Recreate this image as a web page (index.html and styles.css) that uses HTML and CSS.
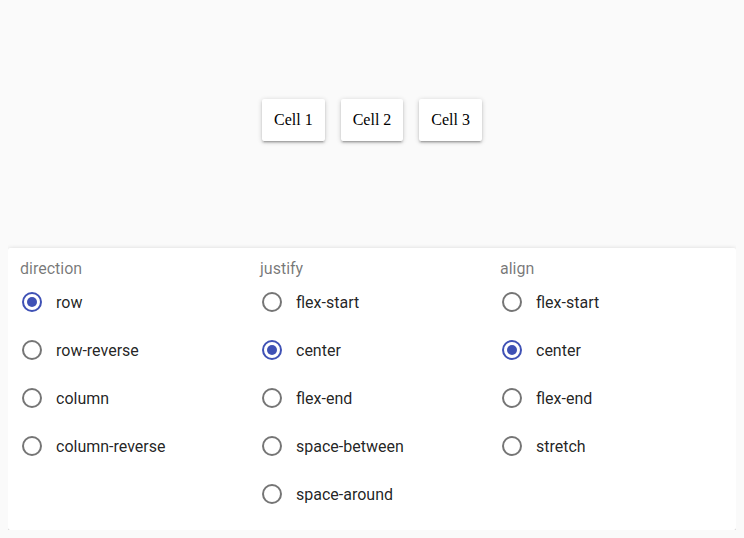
FILE: index.html
```html
<!DOCTYPE html>
<html>
<head>
<meta charset="utf-8">
<link rel="stylesheet" href="styles.css">
</head>
<body>
<div class="stage">
  <div class="cell">Cell 1</div>
  <div class="cell">Cell 2</div>
  <div class="cell">Cell 3</div>
</div>
<div class="panel">
  <div class="group">
    <div class="legend">direction</div>
    <label class="opt"><span class="radio on"><svg viewBox="0 0 24 24"><circle cx="12" cy="12" r="9"/><circle class="dot" cx="12" cy="12" r="5"/></svg></span><span>row</span></label>
    <label class="opt"><span class="radio"><svg viewBox="0 0 24 24"><circle cx="12" cy="12" r="9"/></svg></span><span>row-reverse</span></label>
    <label class="opt"><span class="radio"><svg viewBox="0 0 24 24"><circle cx="12" cy="12" r="9"/></svg></span><span>column</span></label>
    <label class="opt"><span class="radio"><svg viewBox="0 0 24 24"><circle cx="12" cy="12" r="9"/></svg></span><span>column-reverse</span></label>
  </div>
  <div class="group">
    <div class="legend">justify</div>
    <label class="opt"><span class="radio"><svg viewBox="0 0 24 24"><circle cx="12" cy="12" r="9"/></svg></span><span>flex-start</span></label>
    <label class="opt"><span class="radio on"><svg viewBox="0 0 24 24"><circle cx="12" cy="12" r="9"/><circle class="dot" cx="12" cy="12" r="5"/></svg></span><span>center</span></label>
    <label class="opt"><span class="radio"><svg viewBox="0 0 24 24"><circle cx="12" cy="12" r="9"/></svg></span><span>flex-end</span></label>
    <label class="opt"><span class="radio"><svg viewBox="0 0 24 24"><circle cx="12" cy="12" r="9"/></svg></span><span>space-between</span></label>
    <label class="opt"><span class="radio"><svg viewBox="0 0 24 24"><circle cx="12" cy="12" r="9"/></svg></span><span>space-around</span></label>
  </div>
  <div class="group">
    <div class="legend">align</div>
    <label class="opt"><span class="radio"><svg viewBox="0 0 24 24"><circle cx="12" cy="12" r="9"/></svg></span><span>flex-start</span></label>
    <label class="opt"><span class="radio on"><svg viewBox="0 0 24 24"><circle cx="12" cy="12" r="9"/><circle class="dot" cx="12" cy="12" r="5"/></svg></span><span>center</span></label>
    <label class="opt"><span class="radio"><svg viewBox="0 0 24 24"><circle cx="12" cy="12" r="9"/></svg></span><span>flex-end</span></label>
    <label class="opt"><span class="radio"><svg viewBox="0 0 24 24"><circle cx="12" cy="12" r="9"/></svg></span><span>stretch</span></label>
  </div>
</div>
</body>
</html>
```

FILE: styles.css
```css
html, body {
  background: #fafafa;
}
body {
  margin: 8px;
  font-family: "Liberation Serif", serif;
}
.stage {
  height: 224px;
  display: flex;
  align-items: center;
  justify-content: center;
  gap: 16px;
  margin-bottom: 16px;
}
.cell {
  background: #fff;
  padding: 12px;
  font-size: 16px;
  line-height: 18px;
  color: #000;
  border-radius: 2px;
  box-shadow: 0 1px 5px 0 rgba(0,0,0,0.2), 0 2px 2px 0 rgba(0,0,0,0.14), 0 3px 1px -2px rgba(0,0,0,0.12);
}
.panel {
  background: #fff;
  border-radius: 2px;
  box-shadow: 0 1px 5px 0 rgba(0,0,0,0.2), 0 2px 2px 0 rgba(0,0,0,0.14), 0 3px 1px -2px rgba(0,0,0,0.12);
  padding: 12px;
  display: grid;
  grid-template-columns: 240px 240px 240px;
  font-family: Roboto, "Liberation Sans", sans-serif;
}
.group {
  display: flex;
  flex-direction: column;
}
.legend {
  font-size: 16px;
  line-height: 18px;
  color: rgba(0,0,0,0.54);
}
.opt {
  height: 48px;
  display: flex;
  align-items: center;
  font-size: 16px;
  color: rgba(0,0,0,0.87);
}
.radio {
  width: 24px;
  height: 24px;
  margin-right: 12px;
  display: block;
}
.radio svg {
  width: 24px;
  height: 24px;
  display: block;
}
.radio circle {
  fill: none;
  stroke: rgba(0,0,0,0.54);
  stroke-width: 2;
}
.radio.on circle {
  stroke: #3f51b5;
}
.radio.on circle.dot {
  fill: #3f51b5;
  stroke: none;
}
```
